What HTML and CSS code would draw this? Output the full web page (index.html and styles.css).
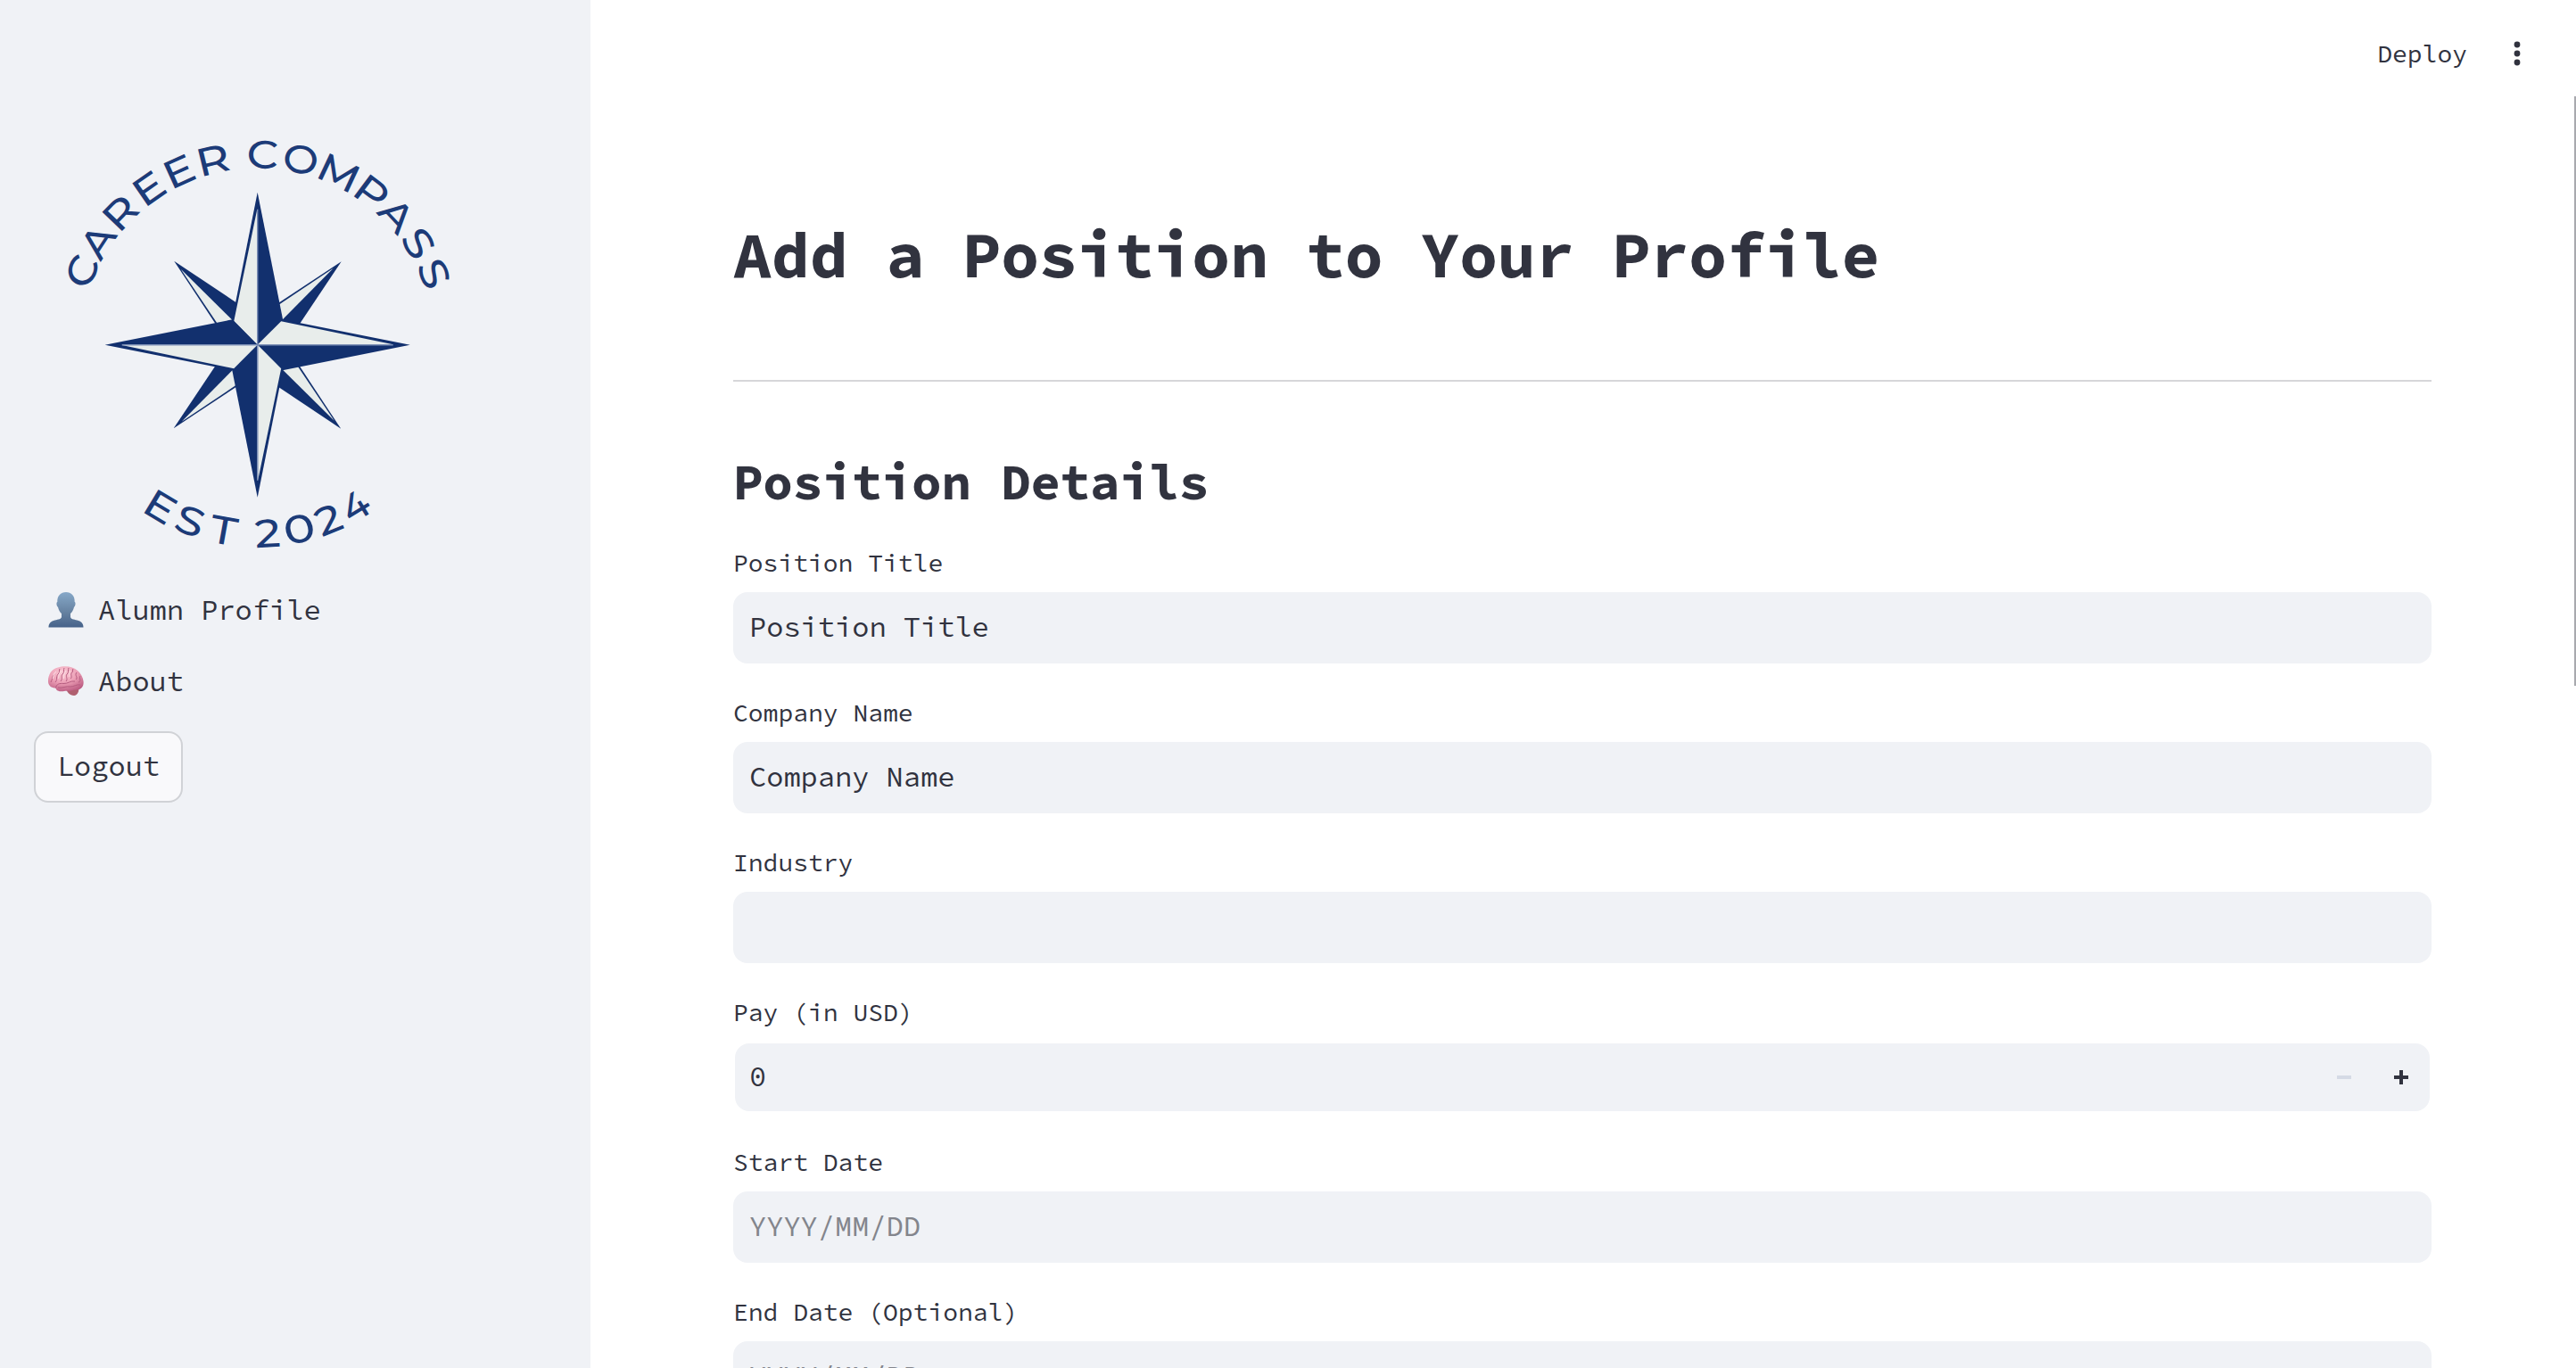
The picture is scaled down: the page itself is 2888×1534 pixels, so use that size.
FILE: index.html
```
<!DOCTYPE html>
<html lang="en">
<head>
<meta charset="utf-8">
<title>Career Compass</title>
<link rel="stylesheet" href="styles.css">
</head>
<body>
<aside class="sidebar">
  <svg class="logo" width="500" height="500" viewBox="-248.7 -256.7 500 500" role="img" aria-label="Career Compass, est 2024">
    <defs>
      <g id="minor">
        <path class="navy" d="M94 -93.5L0 -31.5V0H31.5Z"/>
        <path class="pale" d="M85 -86L0 -29V0Z"/>
      </g>
      <g id="major">
        <path class="navy" d="M0 -171L28.5 -28L0 0L-28.5 -28Z"/>
        <path class="pale" d="M-.4 -152V-.4L-26.500 -26.500Z"/>
        <path class="axis" d="M0 -152V0"/>
      </g>
    </defs>
    <use href="#minor"/>
    <use href="#minor" transform="rotate(90)"/>
    <use href="#minor" transform="rotate(180)"/>
    <use href="#minor" transform="rotate(270)"/>
    <use href="#major"/>
    <use href="#major" transform="rotate(90)"/>
    <use href="#major" transform="rotate(180)"/>
    <use href="#major" transform="rotate(270)"/>
    <g class="ring">
      <text transform="rotate(-67.3) scale(1.12 1)" y="-198">C</text>
      <text transform="rotate(-57) scale(1.12 1)" y="-198">A</text>
      <text transform="rotate(-46.1) scale(1.17 1)" y="-198">R</text>
      <text transform="rotate(-34.8) scale(1.17 1)" y="-198">E</text>
      <text transform="rotate(-24.4) scale(1.17 1)" y="-198">E</text>
      <text transform="rotate(-13.6) scale(1.17 1)" y="-198">R</text>
      <text transform="rotate(1.5) scale(1.12 1)" y="-198">C</text>
      <text transform="rotate(13.1) scale(1.08 1)" y="-198">O</text>
      <text transform="rotate(25.3) scale(1.12 1)" y="-198">M</text>
      <text transform="rotate(36.800) scale(1.17 1)" y="-198">P</text>
      <text transform="rotate(47) scale(1.12 1)" y="-198">A</text>
      <text transform="rotate(57.7) scale(1.17 1)" y="-198">S</text>
      <text transform="rotate(68) scale(1.17 1)" y="-198">S</text>
      <text transform="rotate(31) scale(1.17 1)" y="227">E</text>
      <text transform="rotate(20.9) scale(1.17 1)" y="227">S</text>
      <text transform="rotate(10.3) scale(1.17 1)" y="227">T</text>
      <text transform="rotate(-3.1) scale(1.14 1)" y="227">2</text>
      <text transform="rotate(-12.8) scale(1.2 1)" y="227">0</text>
      <text transform="rotate(-22.1) scale(1.14 1)" y="227">2</text>
      <text transform="rotate(-31.2) scale(1 1)" y="227">4</text>
    </g>
  </svg>
  <nav class="nav">
    <a class="nav-item">
      <svg class="nav-icon" width="40" height="40" viewBox="0 0 40 40">
        <defs><linearGradient id="bust" x1="0" y1="0" x2="0" y2="1"><stop offset="0" stop-color="#86a8c8"/><stop offset=".6" stop-color="#64809f"/><stop offset="1" stop-color="#46628a"/></linearGradient></defs>
        <path fill="url(#bust)" d="M20 0C26 0 30 4 29.7 11C31.2 11.4 30.5 16 29 16.8C28.3 20 26.800 22.500 25 24V28C26 31 30 30.500 34 32C38 33.500 39.500 36 39.500 39.500H.5C.5 36 2 33.500 6 32C10 30.500 14 31 15 28V24C13.200 22.500 11.700 20 11 16.800C9.500 16 8.800 11.400 10.300 11C10 4 14 0 20 0Z"/>
      </svg>
      <span>Alumn Profile</span>
    </a>
    <a class="nav-item">
      <svg class="nav-icon" width="40" height="40" viewBox="0 0 40 40">
        <defs><radialGradient id="lobe" cx=".42" cy=".25" r=".8"><stop offset="0" stop-color="#fbcbd6"/><stop offset=".5" stop-color="#ec9fb6"/><stop offset="1" stop-color="#b9587f"/></radialGradient></defs>
        <path fill="#b0606f" d="M20 28C21 32 24 36 29 36C33 35.500 35 31 34 27Z"/>
        <path fill="url(#lobe)" d="M0 20C0 12 4 6 11 4.500C18 2 28 3 33 8C38 12 41 20 39 25C37.500 29 33 30.500 29 29.500C25 31.500 20 30.500 18 31C14 32 9 31 8.500 27.500C4 27.500 0 25 0 20Z"/>
        <path class="fold" d="M8.500 27.500C9 23 13 22 17 22.500C22 23 25 19 30 20M11 27C16 28 20 25 25 26C29 26 32 23 36 24M3 21C5 18 4 14 7 12M8 21C11 18 8 14 12 11C13 9 12 7 13 6M14 20C17 17 13 14 17 11C18 9 17 7 18 5M20 20C23 17 18 14 22 11C23 9 22 7 23 5M25 17C28 15 24 12 27 10C28 9 27 7 28 6M31 18C34 16 29 13 32 10M34 21C38 20 34 16 36 14"/>
        <path class="shine" d="M5 17C7 14 5 12 9 9M11 17C13 15 10 13 15 8M17 17C19 14 16 13 20 8M23 15C25 13 22 12 25 8"/>
      </svg>
      <span>About</span>
    </a>
  </nav>
  <button class="logout" type="button">Logout</button>
</aside>
<main class="main">
  <header class="toolbar">
    <span class="deploy">Deploy</span>
    <svg width="48" height="48" viewBox="0 0 24 24" fill="currentColor" aria-label="Menu"><circle cx="12" cy="7" r="1.7"/><circle cx="12" cy="12" r="1.7"/><circle cx="12" cy="17" r="1.7"/></svg>
  </header>
  <div class="content">
    <h1 class="title">Add a Position to Your Profile</h1>
    <hr class="rule">
    <h2 class="section">Position Details</h2>
    <form class="form">
      <div class="field"><label class="label">Position Title</label><div class="input">Position Title</div></div>
      <div class="field"><label class="label">Company Name</label><div class="input">Company Name</div></div>
      <div class="field"><label class="label">Industry</label><div class="input"></div></div>
      <div class="field">
        <label class="label">Pay (in USD)</label>
        <div class="input number">
          <span class="value">0</span>
          <svg class="step disabled" width="16" height="16" viewBox="0 0 16 16"><path d="M0 6H16V10H0Z"/></svg>
          <svg class="step" width="16" height="16" viewBox="0 0 16 16"><path d="M0 6H6V0H10V6H16V10H10V16H6V10H0Z"/></svg>
        </div>
      </div>
      <div class="field"><label class="label">Start Date</label><div class="input empty">YYYY/MM/DD</div></div>
      <div class="field"><label class="label">End Date (Optional)</label><div class="input empty">YYYY/MM/DD</div></div>
    </form>
  </div>
  <div class="scrollbar"></div>
</main>
</body>
</html>
```
FILE: styles.css
```
* { box-sizing: border-box; }

body {
  margin: 0;
  height: 1534px;
  display: flex;
  overflow: hidden;
  background: #fff;
  color: #31333f;
  font: 450 32px/40px "Source Code Pro", "DejaVu Sans Mono", monospace;
}

/* Sidebar */
.sidebar {
  flex: none;
  width: 662px;
  padding: 130px 38px 0 38px;
  display: flex;
  flex-direction: column;
  align-items: flex-start;
  background: #f0f2f6;
}
.logo { display: block; margin-left: 2px; overflow: visible; }
.navy { fill: #12306e; }
.pale { fill: #e8edeb; }
.axis { stroke: #7d90b6; stroke-width: 1.4; }
.ring {
  fill: #1c3b78;
  font: 500 44px "Montserrat", "Lato", sans-serif;
  text-anchor: middle;
}
.nav {
  margin-top: 22px;
  display: flex;
  flex-direction: column;
  gap: 16px;
}
.nav-item {
  height: 64px;
  padding: 0 16px;
  display: flex;
  align-items: center;
  gap: 16px;
}
.fold { fill: none; stroke: #b65d80; stroke-width: 1; }
.shine { fill: none; stroke: #fde0e6; stroke-width: 1; }
.logout {
  width: 167px;
  height: 80px;
  margin-top: 24px;
  padding: 0 0 2px;
  border: 2px solid #d0d2d6;
  border-radius: 16px;
  background: #f9f9fb;
  color: inherit;
  font: inherit;
}

/* Main column */
.main {
  flex: 1;
  position: relative;
}
.toolbar {
  height: 120px;
  padding: 0 42px 0 0;
  display: flex;
  justify-content: flex-end;
  align-items: center;
  gap: 32px;
}
.deploy { font-size: 28px; }
.content {
  padding: 123px 162px 0 160px;
}
.title {
  margin: 0;
  font-size: 72px;
  font-weight: 675;
  line-height: 86px;
  letter-spacing: -0.36px;
}
.rule {
  height: 2px;
  margin: 97px 0 78px;
  border: 0;
  background: #d6d6d9;
}
.section {
  margin: 0 0 34px;
  font-size: 56px;
  font-weight: 675;
  line-height: 68px;
  letter-spacing: -0.28px;
}
.form {
  display: flex;
  flex-direction: column;
  gap: 32px;
}
.label {
  display: block;
  margin-bottom: 10px;
  font-size: 28px;
  line-height: 46px;
}
.input {
  height: 80px;
  padding: 0 18px 2px;
  display: flex;
  align-items: center;
  border-radius: 16px;
  background: #f0f2f6;
}
.empty { color: #83858c; }
.number {
  border: 2px solid #fff;
  border-radius: 18px;
  padding: 0 24px 0 16px;
  gap: 48px;
}
.value {
  flex: 1;
  padding-bottom: 2px;
}
.step { fill: #31333f; }
.disabled { fill: #d5dae5; }
.scrollbar {
  position: absolute;
  top: 108px;
  right: 0;
  width: 2px;
  height: 661px;
  background: #a8a9ae;
}
```
